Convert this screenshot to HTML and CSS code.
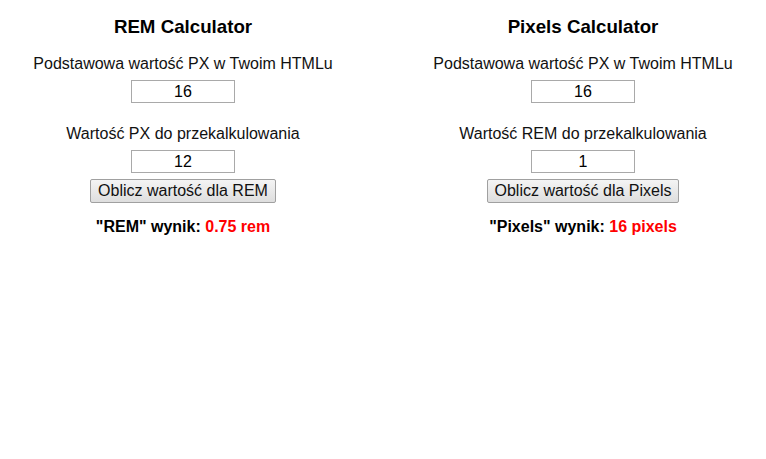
FILE: index.html
```html
<!DOCTYPE html>
<html lang="pl">
<head>
<meta charset="utf-8">
<title>REM / Pixels Calculator</title>
<link rel="stylesheet" href="styles.css">
</head>
<body>
<div class="calcs">
  <section class="calc">
    <h3 class="calc-title">REM Calculator</h3>
    <label class="calc-label">Podstawowa wartość PX w Twoim HTMLu</label>
    <input class="calc-input" type="text" value="16">
    <label class="calc-label second">Wartość PX do przekalkulowania</label>
    <input class="calc-input" type="text" value="12">
    <button class="calc-btn" type="button">Oblicz wartość dla REM</button>
    <p class="calc-result">"REM" wynik: <span class="calc-value">0.75 rem</span></p>
  </section>
  <section class="calc">
    <h3 class="calc-title">Pixels Calculator</h3>
    <label class="calc-label">Podstawowa wartość PX w Twoim HTMLu</label>
    <input class="calc-input" type="text" value="16">
    <label class="calc-label second">Wartość REM do przekalkulowania</label>
    <input class="calc-input" type="text" value="1">
    <button class="calc-btn" type="button">Oblicz wartość dla Pixels</button>
    <p class="calc-result">"Pixels" wynik: <span class="calc-value">16 pixels</span></p>
  </section>
</div>
</body>
</html>
```
FILE: styles.css
```css
html, body {
  margin: 0;
  padding: 0;
  background: #fff;
}
body {
  font-family: "Liberation Sans", Arial, sans-serif;
  font-size: 16px;
  color: #000;
}
.calcs {
  display: flex;
  gap: 34px;
}
.calc {
  width: 366px;
  display: flex;
  flex-direction: column;
  align-items: center;
}
.calc-title {
  margin: 16px 0 0;
  font-size: 18.72px;
  font-weight: bold;
  line-height: 22px;
}
.calc-label {
  display: block;
  margin-top: 17px;
  line-height: 18px;
  color: #111;
}
.calc-label.second {
  margin-top: 22px;
}
.calc-input {
  box-sizing: border-box;
  margin: 7px 0 0;
  width: 104px;
  height: 23px;
  border: 1px solid #a9a9a9;
  padding: 0 2px;
  font-family: "Liberation Sans", Arial, sans-serif;
  font-size: 16px;
  text-align: center;
  color: #000;
  background: #fff;
}
.calc-btn {
  box-sizing: border-box;
  margin-top: 6px;
  height: 24px;
  padding: 0 7px;
  border: 1px solid #a0a0a0;
  border-radius: 2px;
  background: linear-gradient(#f4f4f4, #dedede);
  font-family: "Liberation Sans", Arial, sans-serif;
  font-size: 16px;
  color: #111;
  line-height: 20px;
}
.calc-result {
  margin: 15px 0 0;
  font-weight: bold;
  line-height: 18px;
}
.calc-value {
  color: #ff0000;
}
```
